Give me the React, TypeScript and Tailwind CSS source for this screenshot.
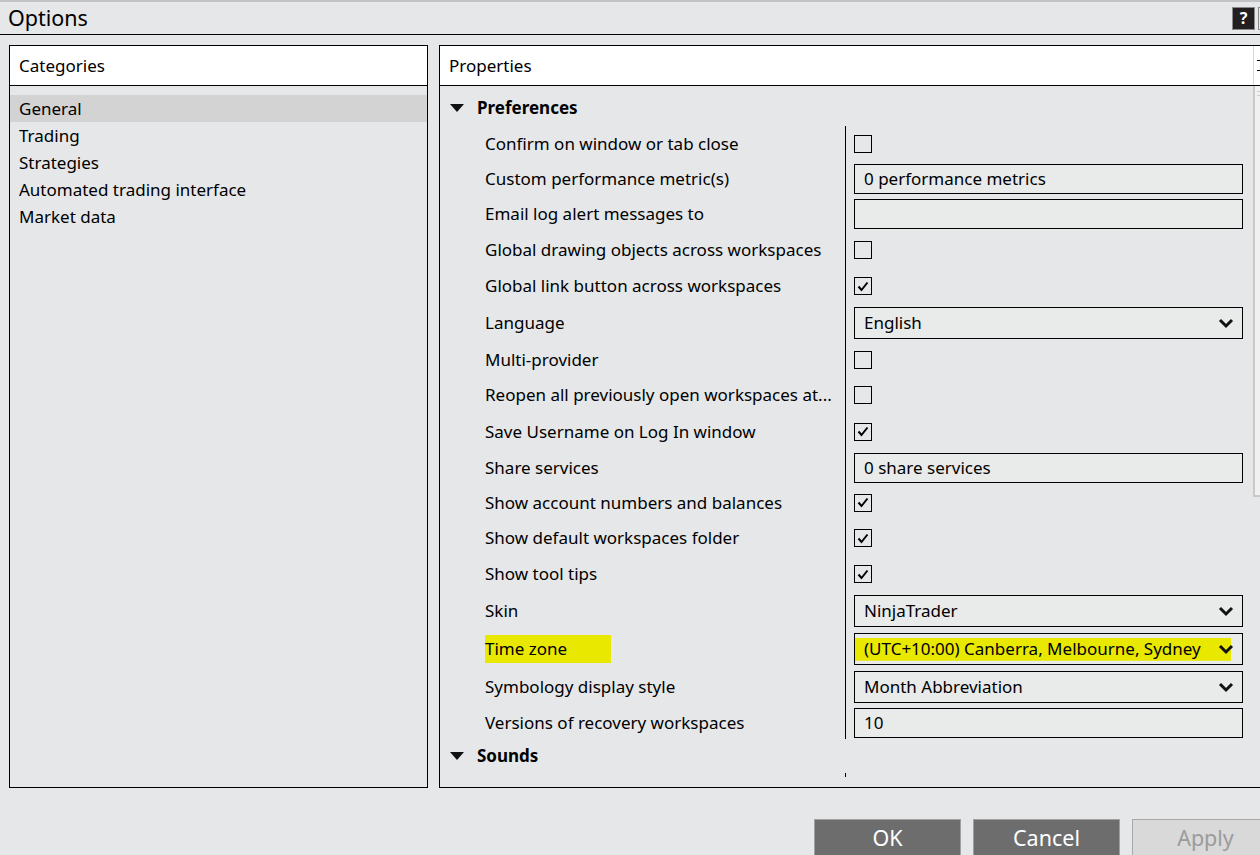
import React from "react"

type Row = {
  label: string
  h: string
  kind: "check" | "text" | "combo"
  value?: string
  checked?: boolean
  marked?: boolean
}

const categories = ["General", "Trading", "Strategies", "Automated trading interface", "Market data"]

const rows: Row[] = [
  { label: "Confirm on window or tab close", h: "h-[35px]", kind: "check" },
  { label: "Custom performance metric(s)", h: "h-[35px]", kind: "text", value: "0 performance metrics" },
  { label: "Email log alert messages to", h: "h-[36px]", kind: "text", value: "" },
  { label: "Global drawing objects across workspaces", h: "h-[36px]", kind: "check" },
  { label: "Global link button across workspaces", h: "h-[36px]", kind: "check", checked: true },
  { label: "Language", h: "h-[38px]", kind: "combo", value: "English" },
  { label: "Multi-provider", h: "h-[35px]", kind: "check" },
  { label: "Reopen all previously open workspaces at...", h: "h-[36px]", kind: "check" },
  { label: "Save Username on Log In window", h: "h-[37px]", kind: "check", checked: true },
  { label: "Share services", h: "h-[35px]", kind: "text", value: "0 share services" },
  { label: "Show account numbers and balances", h: "h-[35px]", kind: "check", checked: true },
  { label: "Show default workspaces folder", h: "h-[36px]", kind: "check", checked: true },
  { label: "Show tool tips", h: "h-[36px]", kind: "check", checked: true },
  { label: "Skin", h: "h-[38px]", kind: "combo", value: "NinjaTrader" },
  { label: "Time zone", h: "h-[38px]", kind: "combo", value: "(UTC+10:00) Canberra, Melbourne, Sydney", marked: true },
  { label: "Symbology display style", h: "h-[38px]", kind: "combo", value: "Month Abbreviation" },
  { label: "Versions of recovery workspaces", h: "h-[33px]", kind: "text", value: "10" },
]

function Caret() {
  return (
    <svg width="14" height="9" viewBox="0 0 14 9" className="shrink-0">
      <polygon points="0,0 14,0 7,8" fill="#111" />
    </svg>
  )
}

function Chevron() {
  return (
    <svg width="16" height="11" viewBox="0 0 16 11" className="shrink-0">
      <polyline points="2,2 8,8 14,2" fill="none" stroke="#111" strokeWidth="3" strokeLinejoin="miter" />
    </svg>
  )
}

function CheckBox({ checked }: { checked?: boolean }) {
  return (
    <div className="w-[18px] h-[18px] border border-black flex items-center justify-center">
      {checked && (
        <svg width="12" height="11" viewBox="0 0 12 11">
          <path d="M1.5 5.5 L4.5 9 L10.5 1.5" fill="none" stroke="#000" strokeWidth="2" />
        </svg>
      )}
    </div>
  )
}

function Value({ row }: { row: Row }) {
  if (row.kind === "check") return <CheckBox checked={row.checked} />
  if (row.kind === "text")
    return (
      <div className="w-[389px] h-[30px] border border-black bg-[#e9eaea] flex items-center pl-[9px]">
        {row.value}
      </div>
    )
  return (
    <div className="w-[389px] h-[32px] border border-black bg-[#e9eaea] flex items-center">
      <div
        className={`flex items-center justify-between w-full h-full pl-[9px] pr-[8px] ${
          row.marked ? "bg-[linear-gradient(to_right,#e8e800_0,#e8e800_376px,transparent_376px)] bg-[length:100%_76%] bg-no-repeat bg-[position:0_55%]" : ""
        }`}
      >
        <span>{row.value}</span>
        <Chevron />
      </div>
    </div>
  )
}

export default function App() {
  return (
    <div
      className="w-[1260px] h-[855px] overflow-hidden bg-[#e6e7e9] text-black text-[17px] border-t-2 border-[#c2c3c5]"
      style={{ fontFamily: '"Noto Sans", "Open Sans", sans-serif' }}
    >
      <div className="h-[33px] border-b border-black flex items-center justify-between">
        <span className="pl-[8px] text-[21.5px] leading-none">Options</span>
        <div className="flex items-center gap-[3px] mr-[-8px]">
          <div className="w-[23px] h-[23px] bg-[#231f20] border border-[#8a8a8a] text-white font-bold text-[16px] flex items-center justify-center leading-none">
            ?
          </div>
          <div className="w-[10px] h-[23px] border border-[#8a8a8a] bg-[#e6e7e9]" />
        </div>
      </div>

      <div className="flex pt-[10px] pl-[9px] gap-[11px]">
        <div className="w-[419px] h-[743px] border border-black shrink-0">
          <div className="h-[40px] bg-white border-b border-black flex items-center pl-[9px]">Categories</div>
          <div className="pt-[9px]">
            {categories.map((c, i) => (
              <div key={c} className={`h-[27px] flex items-center pl-[9px] ${i === 0 ? "bg-[#d3d3d3]" : ""}`}>
                {c}
              </div>
            ))}
          </div>
        </div>

        <div className="w-[830px] h-[743px] border border-black shrink-0">
          <div className="h-[40px] bg-white border-b border-black flex items-center">
            <span className="pl-[9px] w-[813px]">Properties</span>
            <div className="h-full border-l border-[#d8d8d8] pl-[3px] flex flex-col justify-center gap-[9px]">
              <div className="w-[3px] h-[1px] bg-black" />
              <div className="w-[3px] h-[1px] bg-black" />
            </div>
          </div>
          <div className="flex">
            <div className="w-[813px]">
              <div className="h-[40px] pt-[4px] flex items-center pl-[10px] gap-[13px]">
                <Caret />
                <span className="font-bold">Preferences</span>
              </div>
              {rows.map((r) => (
                <div key={r.label} className={`flex ${r.h}`}>
                  <div className="w-[405px] pl-[45px] flex items-center whitespace-nowrap">
                    <span className={r.marked ? "bg-[#e8e800] pr-[44px] py-[1px]" : ""}>{r.label}</span>
                  </div>
                  <div className="flex-1 border-l border-black pl-[8px] flex items-center">
                    <Value row={r} />
                  </div>
                </div>
              ))}
              <div className="h-[34px] flex items-center pl-[10px] gap-[13px]">
                <Caret />
                <span className="font-bold">Sounds</span>
              </div>
              <div className="flex">
                <div className="w-[405px]" />
                <div className="h-[4px] border-l border-black" />
              </div>
            </div>
            <div className="w-[10px] h-[411px] bg-[#f1f1f1] border-l-2 border-b-2 border-[#c9c9c9] pt-[5px] pl-[2px] flex flex-col gap-[3px]">
              <div className="w-[5px] h-[1px] bg-[#cfcfcf]" />
              <div className="w-[5px] h-[1px] bg-[#cfcfcf]" />
            </div>
          </div>
        </div>
      </div>

      <div className="flex pt-[31px] pl-[814px] gap-[12px] text-[21.5px]">
        <div className="w-[147px] h-[44px] shrink-0 bg-[#6d6d6d] border border-[#a0a0a0] text-white flex items-center justify-center pb-[6px]">OK</div>
        <div className="w-[147px] h-[44px] shrink-0 bg-[#6d6d6d] border border-[#a0a0a0] text-white flex items-center justify-center pb-[6px]">Cancel</div>
        <div className="w-[147px] h-[44px] shrink-0 bg-[#d9d9d9] border border-[#a8a8a8] text-[#9b9b9b] flex items-center justify-center pb-[6px]">Apply</div>
      </div>
    </div>
  )
}
